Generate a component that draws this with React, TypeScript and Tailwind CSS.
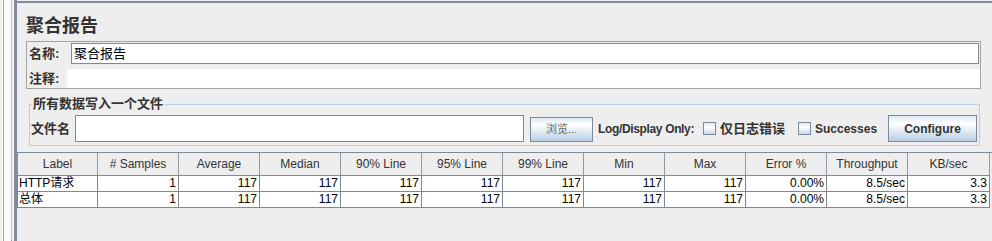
import React from "react";

const headers = [
  "Label",
  "# Samples",
  "Average",
  "Median",
  "90% Line",
  "95% Line",
  "99% Line",
  "Min",
  "Max",
  "Error %",
  "Throughput",
  "KB/sec",
];

const rows = [
  ["HTTP请求", "1", "117", "117", "117", "117", "117", "117", "117", "0.00%", "8.5/sec", "3.3"],
  ["总体", "1", "117", "117", "117", "117", "117", "117", "117", "0.00%", "8.5/sec", "3.3"],
];

const cellWidth = (i: number) =>
  i === 0 ? "w-[81px] border-l" : i === 11 ? "w-[82px]" : "w-[81px]";

const Checkbox = () => (
  <span className="w-[13px] h-[13px] border border-[#7a8a99] bg-linear-to-b from-[#dde8f3] via-white via-40% to-[#c8d8e8] shrink-0" />
);

export default function App() {
  return (
    <div className="flex w-[992px] h-[241px] bg-[#eeeeee] overflow-hidden font-['Liberation_Sans','Noto_Sans_CJK_SC',sans-serif] text-[#333333]">
      {/* left gutter */}
      <div className="flex w-[14px] shrink-0">
        <div className="w-[3px] bg-[#f2f2f2]" />
        <div className="w-px bg-[#a9a9a9]" />
        <div className="w-[7px] bg-[#fafafa]" />
        <div className="w-px border-l border-dotted border-[#9a9a9a]" />
        <div className="w-[2px] bg-[#f2f2f2]" />
      </div>

      {/* main panel */}
      <div className="flex-1 flex flex-col border-l-[3px] border-[#7d8d9e]">
        <div className="h-px bg-[#eeeeee]" />
        <div className="h-[2px] bg-[#7d8d9e]" />

        {/* title */}
        <div className="ml-[9px] pt-[13px] mb-[6px] h-[32px] text-[18px] leading-[20px] font-bold text-[#333333]">
          聚合报告
        </div>

        {/* name / comment */}
        <div className="ml-[9px] mr-[11px] border border-[#a3a3a3] flex flex-col">
          <div className="flex items-center py-px">
            <span className="w-[44px] pl-[2px] text-[13px] font-bold leading-[21px]">名称:</span>
            <div className="flex-1 mr-px h-[21px] border border-[#7a8a99] bg-white pl-[2px] text-[13px] leading-[19px] text-black">
              聚合报告
            </div>
          </div>
          <div className="flex items-center mt-[4px]">
            <span className="w-[40px] pl-[2px] text-[13px] font-bold leading-[19px]">注释:</span>
            <div className="flex-1 h-[19px] bg-white" />
          </div>
        </div>

        {/* write results to file */}
        <fieldset className="ml-[12px] mr-[12px] mt-[7px] border border-[#b8cfe5] pb-[3px]">
          <legend className="ml-[2px] px-px text-[13px] font-bold leading-[16px]">
            所有数据写入一个文件
          </legend>
          <div className="flex items-center h-[27px] mt-[3px]">
            <span className="w-[45px] pl-px text-[13px] font-bold">文件名</span>
            <div className="w-[449px] h-[27px] border border-[#7a8a99] bg-white" />
            <button className="self-end ml-[6px] w-[63px] h-[25px] border border-[#7a8a99] bg-linear-to-b from-[#dde8f3] via-white via-30% to-[#b8cfe5] text-[11px] text-[#666666]">
              浏览...
            </button>
            <span className="ml-[5px] w-[105px] text-[12px] font-bold whitespace-nowrap tracking-[-0.35px]">
              Log/Display Only:
            </span>
            <Checkbox />
            <span className="ml-[4px] w-[78px] text-[13px] font-bold">仅日志错误</span>
            <Checkbox />
            <span className="ml-[4px] w-[73px] text-[12px] font-bold">Successes</span>
            <button className="w-[89px] h-[27px] border border-[#7a8a99] bg-linear-to-b from-[#dde8f3] via-white via-30% to-[#b8cfe5] text-[12px] font-bold text-[#333333]">
              Configure
            </button>
          </div>
        </fieldset>

        {/* results table */}
        <div className="mt-[6px] border-t border-[#7a8a99] flex-1">
          <div className="flex h-[23px] border-b border-[#7a8a99] w-[973px]">
            {headers.map((h, i) => (
              <div
                key={h}
                className={`${cellWidth(i)} border-r border-[#8a99a8] flex items-center justify-center text-[12px] text-[#333333]`}
              >
                {h}
              </div>
            ))}
          </div>
          {rows.map((r, ri) => (
            <div key={ri} className="flex h-[16px] border-b border-[#7a8a99] bg-white w-[973px]">
              {r.map((c, i) => (
                <div
                  key={i}
                  className={`${cellWidth(i)} border-r border-[#7a8a99] text-[12px] leading-[15px] text-black ${
                    i === 0 ? "text-left pl-px" : "text-right pr-[2px]"
                  }`}
                >
                  {c}
                </div>
              ))}
            </div>
          ))}
        </div>
      </div>
    </div>
  );
}
